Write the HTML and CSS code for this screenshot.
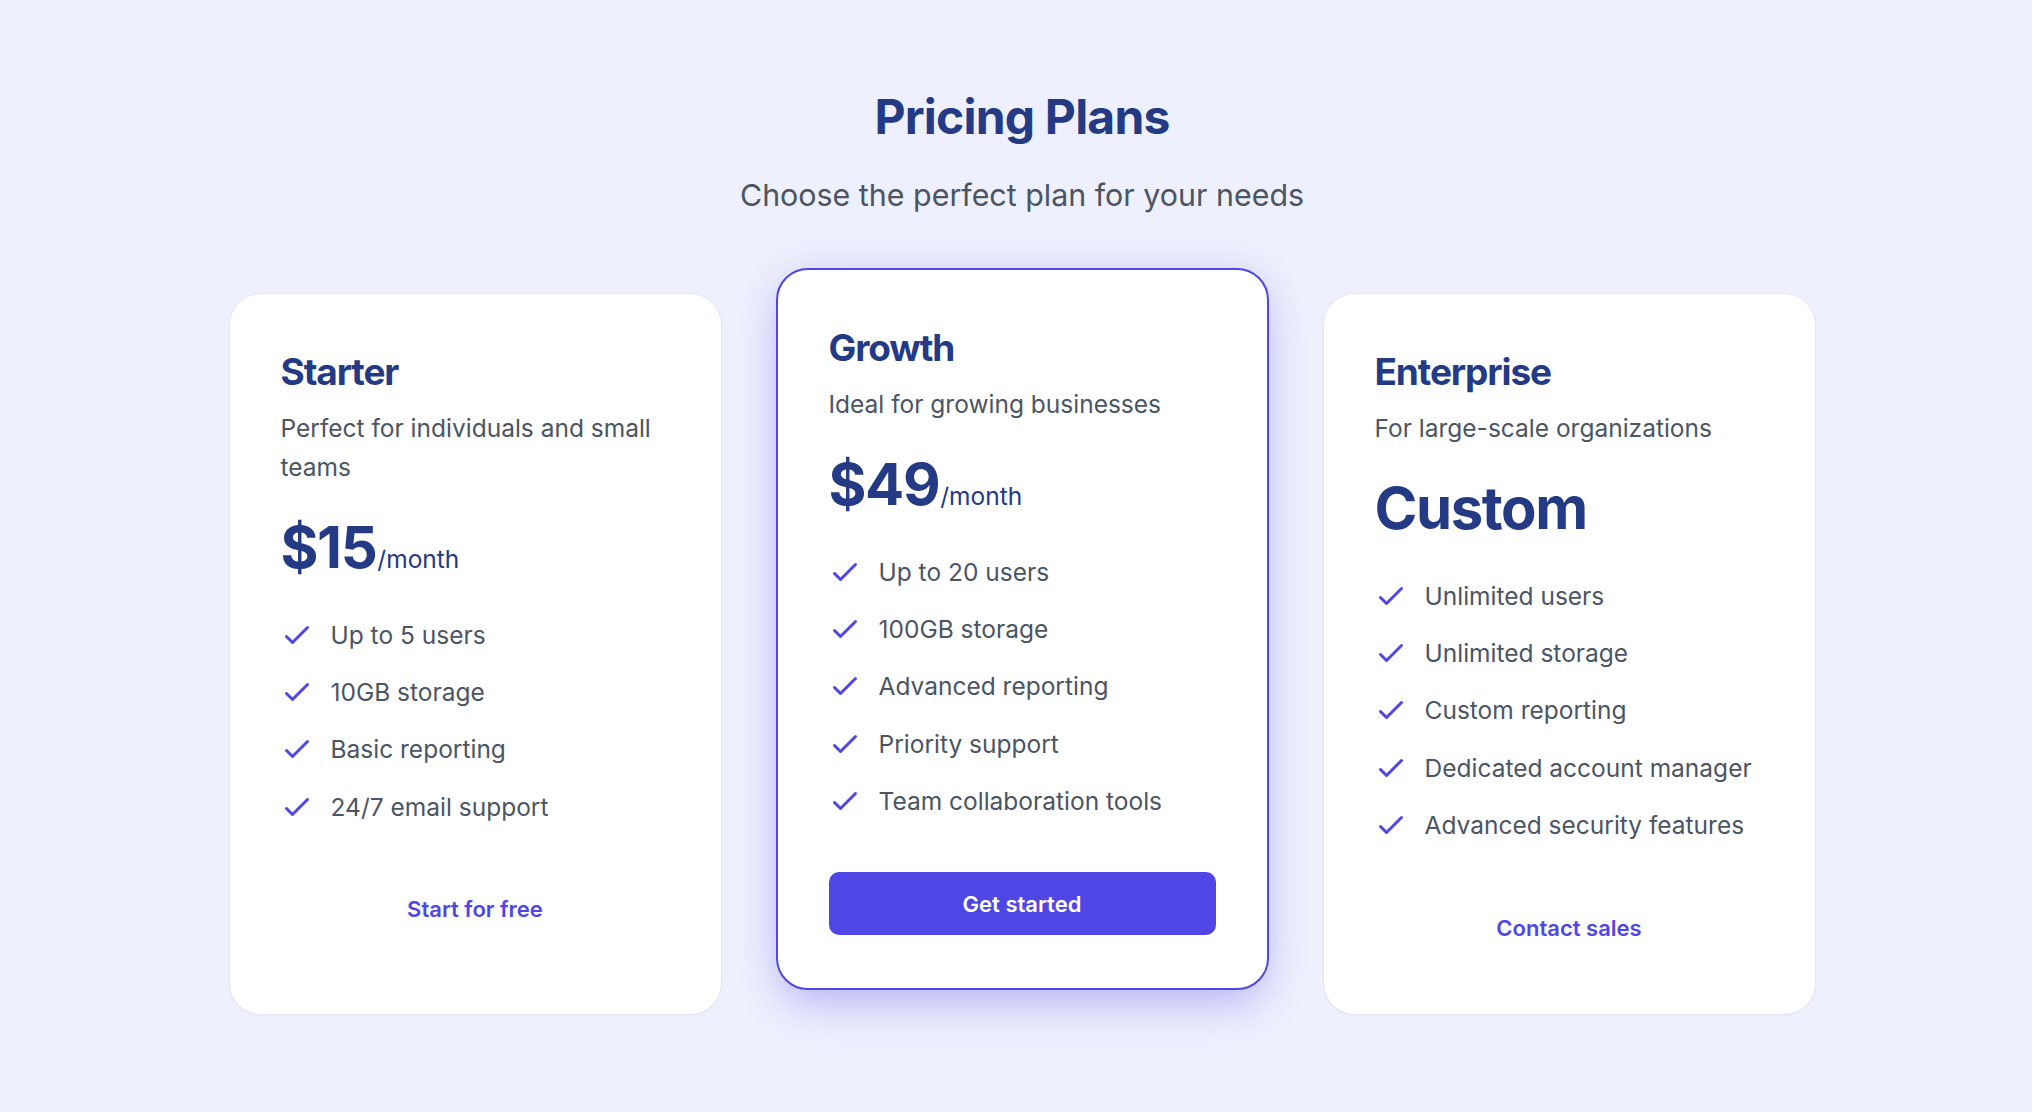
FILE: index.html
```html
<!DOCTYPE html>
<html lang="en">
<head>
<meta charset="utf-8">
<title>Pricing Plans</title>
<link rel="stylesheet" href="styles.css">
</head>
<body>
<main class="pricing">
  <header class="pricing-head">
    <h1 class="pricing-title">Pricing Plans</h1>
    <p class="pricing-sub">Choose the perfect plan for your needs</p>
  </header>
  <section class="plans">
    <article class="plan">
      <h2 class="plan-name">Starter</h2>
      <p class="plan-desc">Perfect for individuals and small teams</p>
      <div class="plan-price"><span class="amount">$15</span><span class="per">/month</span></div>
      <ul class="features">
        <li class="feature"><svg class="check" viewBox="0 0 24 24"><path d="M5 13l4 4L19 7"/></svg><span>Up to 5 users</span></li>
        <li class="feature"><svg class="check" viewBox="0 0 24 24"><path d="M5 13l4 4L19 7"/></svg><span>10GB storage</span></li>
        <li class="feature"><svg class="check" viewBox="0 0 24 24"><path d="M5 13l4 4L19 7"/></svg><span>Basic reporting</span></li>
        <li class="feature"><svg class="check" viewBox="0 0 24 24"><path d="M5 13l4 4L19 7"/></svg><span>24/7 email support</span></li>
      </ul>
      <a class="cta cta-link" href="#">Start for free</a>
    </article>
    <article class="plan plan-featured">
      <h2 class="plan-name">Growth</h2>
      <p class="plan-desc">Ideal for growing businesses</p>
      <div class="plan-price"><span class="amount">$49</span><span class="per">/month</span></div>
      <ul class="features">
        <li class="feature"><svg class="check" viewBox="0 0 24 24"><path d="M5 13l4 4L19 7"/></svg><span>Up to 20 users</span></li>
        <li class="feature"><svg class="check" viewBox="0 0 24 24"><path d="M5 13l4 4L19 7"/></svg><span>100GB storage</span></li>
        <li class="feature"><svg class="check" viewBox="0 0 24 24"><path d="M5 13l4 4L19 7"/></svg><span>Advanced reporting</span></li>
        <li class="feature"><svg class="check" viewBox="0 0 24 24"><path d="M5 13l4 4L19 7"/></svg><span>Priority support</span></li>
        <li class="feature"><svg class="check" viewBox="0 0 24 24"><path d="M5 13l4 4L19 7"/></svg><span>Team collaboration tools</span></li>
      </ul>
      <a class="cta cta-button" href="#">Get started</a>
    </article>
    <article class="plan">
      <h2 class="plan-name">Enterprise</h2>
      <p class="plan-desc">For large-scale organizations</p>
      <div class="plan-price"><span class="amount">Custom</span></div>
      <ul class="features">
        <li class="feature"><svg class="check" viewBox="0 0 24 24"><path d="M5 13l4 4L19 7"/></svg><span>Unlimited users</span></li>
        <li class="feature"><svg class="check" viewBox="0 0 24 24"><path d="M5 13l4 4L19 7"/></svg><span>Unlimited storage</span></li>
        <li class="feature"><svg class="check" viewBox="0 0 24 24"><path d="M5 13l4 4L19 7"/></svg><span>Custom reporting</span></li>
        <li class="feature"><svg class="check" viewBox="0 0 24 24"><path d="M5 13l4 4L19 7"/></svg><span>Dedicated account manager</span></li>
        <li class="feature"><svg class="check" viewBox="0 0 24 24"><path d="M5 13l4 4L19 7"/></svg><span>Advanced security features</span></li>
      </ul>
      <a class="cta cta-link" href="#">Contact sales</a>
    </article>
  </section>
</main>
</body>
</html>
```

FILE: styles.css
```css
* { box-sizing: border-box; }

html, body {
  margin: 0;
  padding: 0;
}

body {
  background: #eef0fd;
  font-family: Inter, "Noto Sans", "Liberation Sans", sans-serif;
  color: #4b5563;
  min-height: 1112px;
}

.pricing {
  width: 1599px;
  padding-left: 12px;
  margin: 0 auto;
  padding-top: 87px;
}

.pricing-head {
  text-align: center;
}

.pricing-title {
  margin: 0;
  font-size: 48px;
  line-height: 60px;
  font-weight: 700;
  letter-spacing: -0.8px;
  color: #243a84;
}

.pricing-sub {
  margin: 26px 0 0;
  font-size: 30.4px;
  line-height: 44px;
  font-weight: 400;
  color: #4b5563;
}

.plans {
  margin-top: 76px;
  display: grid;
  grid-template-columns: repeat(3, 493px);
  column-gap: 54px;
  align-items: stretch;
}

.plan {
  background: #ffffff;
  border: 1px solid #e4e7f0;
  border-radius: 32px;
  padding: 50px 51px 54px;
  display: flex;
  flex-direction: column;
  box-shadow: 0 1px 2px rgba(30, 40, 90, 0.03);
}

.plan-featured {
  border: 2px solid #4f46e5;
  padding: 50px 51px 53px;
  transform: translateY(-25px);
  box-shadow: 0 22px 44px -8px rgba(79, 70, 229, 0.28), 0 0 36px rgba(79, 70, 229, 0.12);
}

.plan-name {
  margin: 0;
  font-size: 37px;
  line-height: 56px;
  font-weight: 700;
  letter-spacing: -1.1px;
  color: #243a84;
}

.plan-desc {
  margin: 8.5px 0 0;
  font-size: 24.5px;
  line-height: 39px;
  color: #4b5563;
}

.plan-price {
  margin-top: 31px;
  line-height: 58px;
  height: 58px;
  color: #243a84;
  white-space: nowrap;
}

.amount {
  font-size: 58px;
  font-weight: 700;
  letter-spacing: -1.4px;
}

.per {
  font-size: 24.5px;
  font-weight: 400;
  margin-left: 1px;
}

.features {
  list-style: none;
  margin: 39px 0 0;
  padding: 0;
  display: flex;
  flex-direction: column;
  gap: 17.4px;
}

.feature {
  display: flex;
  align-items: center;
  gap: 16px;
  height: 40px;
  font-size: 24.5px;
  line-height: 40px;
  color: #4b5563;
}

.check {
  width: 36px;
  height: 36px;
  margin-left: -2px;
  flex: none;
  fill: none;
  stroke: #4f46e5;
  stroke-width: 2;
  stroke-linecap: round;
  stroke-linejoin: round;
}

.cta {
  margin-top: 51px;
  height: 63px;
  display: flex;
  align-items: center;
  justify-content: center;
  font-size: 22px;
  font-weight: 600;
  text-decoration: none;
}

.cta-link {
  color: #4f46e5;
}

.cta-button {
  background: #4f46e5;
  color: #ffffff;
  border-radius: 10px;
}
```
